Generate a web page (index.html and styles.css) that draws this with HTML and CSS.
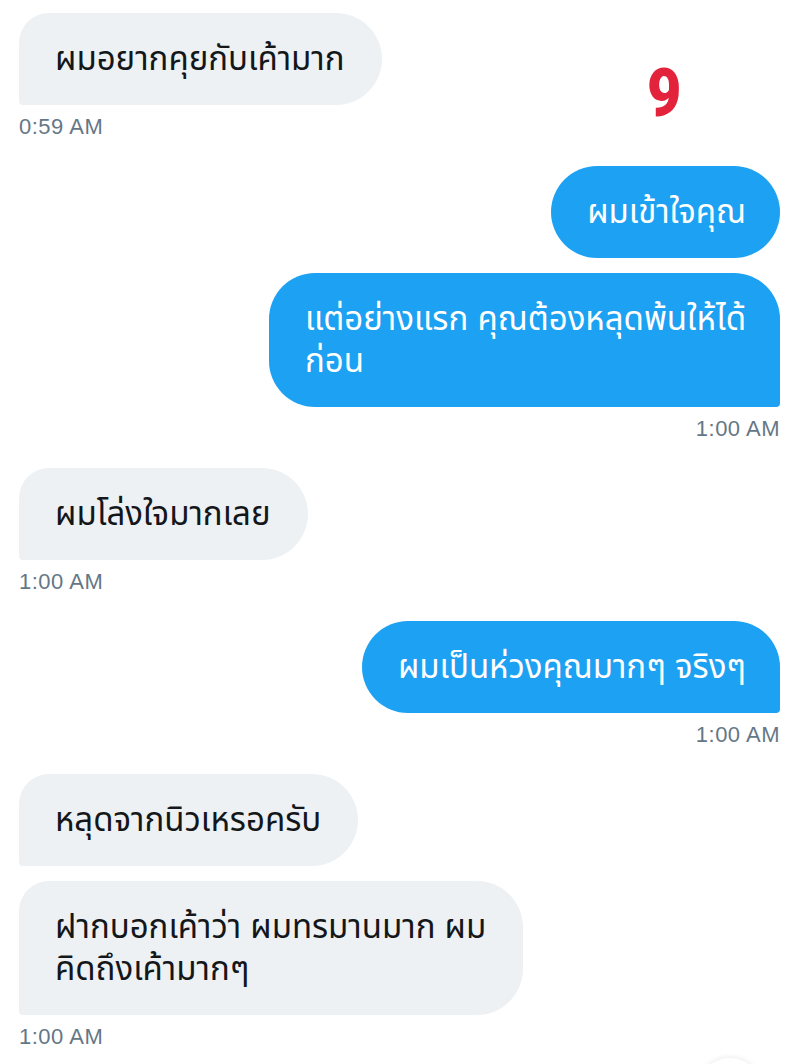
FILE: index.html
```html
<!DOCTYPE html>
<html lang="th">
<head>
  <meta charset="UTF-8" />
  <meta name="viewport" content="width=device-width, initial-scale=1" />
  <title>Messages</title>
  <link rel="stylesheet" href="styles.css">
</head>
<body>
  <div class="chat">
    <div class="group received">
      <div class="bubble">ผมอยากคุยกับเค้ามาก</div>
      <div class="time">0:59 AM</div>
    </div>

    <div class="group sent">
      <div class="bubble">ผมเข้าใจคุณ</div>
      <div class="bubble last">แต่อย่างแรก คุณต้องหลุดพ้นให้ได้<br>ก่อน</div>
      <div class="time">1:00 AM</div>
    </div>

    <div class="group received">
      <div class="bubble">ผมโล่งใจมากเลย</div>
      <div class="time">1:00 AM</div>
    </div>

    <div class="group sent">
      <div class="bubble last">ผมเป็นห่วงคุณมากๆ จริงๆ</div>
      <div class="time">1:00 AM</div>
    </div>

    <div class="group received">
      <div class="bubble">หลุดจากนิวเหรอครับ</div>
      <div class="bubble last">ฝากบอกเค้าว่า ผมทรมานมาก ผม<br>คิดถึงเค้ามากๆ</div>
      <div class="time">1:00 AM</div>
    </div>
  </div>

  <!-- page number marked on the screenshot -->
  <div class="page-num">9</div>
  <div class="fab"></div>
</body>
</html>
```

FILE: styles.css
```css
html {
  overflow: hidden;
}

body {
  margin: 0;
  background: #fff;
  font-family: 'Liberation Sans', 'Noto Sans Thai', 'Noto Sans', sans-serif;
  color: #14171a;
  overflow: hidden;
  height: 1064px;
  position: relative;
}

.chat {
  padding: 13px 20px 0 19px;
  display: flex;
  flex-direction: column;
  gap: 27px;
}

.group {
  display: flex;
  flex-direction: column;
  gap: 15px;
}

.received {
  align-items: flex-start;
}

.sent {
  align-items: flex-end;
}

.bubble {
  font-size: 33px;
  line-height: 42px;
  padding: 25px 37px 25px 36px;
  border-radius: 46px;
}

.received .bubble {
  background: #edf1f3;
  border-radius: 30px 46px 46px 4px;
}

.sent .bubble {
  background: #1da1f2;
  color: #fff;
  padding-right: 34px;
}

.sent .bubble.last {
  border-radius: 46px 46px 4px 46px;
}

.time {
  font-size: 22px;
  line-height: 24px;
  letter-spacing: 0.5px;
  color: #657786;
  margin-top: -5px;
}

.page-num {
  position: absolute;
  left: 645px;
  top: 55px;
  font-family: Roboto, sans-serif;
  font-weight: 900;
  font-size: 66px;
  color: #e3223c;
  transform: scaleX(0.9);
}

.fab {
  position: absolute;
  left: 692px;
  bottom: 0;
  width: 76px;
  height: 10px;
  overflow: hidden;
}

.fab::before {
  content: "";
  position: absolute;
  left: 6px;
  top: 4px;
  width: 64px;
  height: 64px;
  border-radius: 50%;
  background: #fff;
  box-shadow: 0 0 6px rgba(0, 0, 0, 0.1);
}
```
